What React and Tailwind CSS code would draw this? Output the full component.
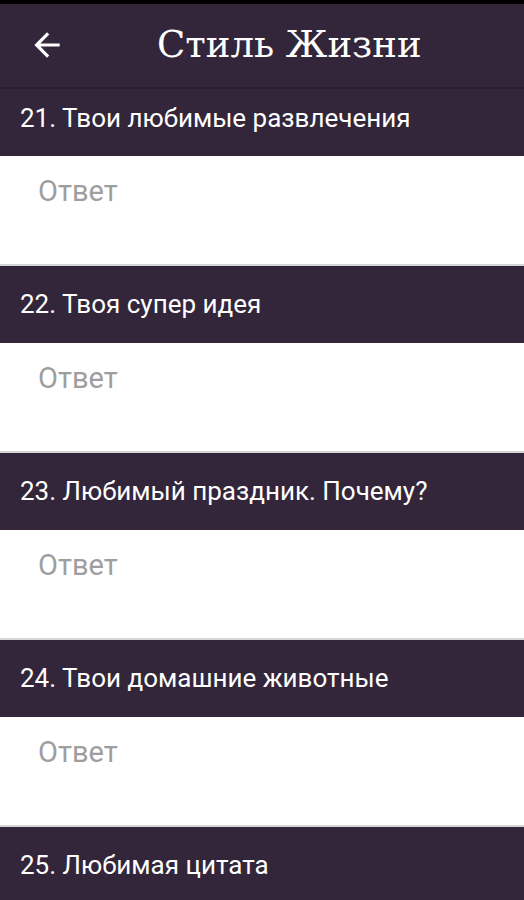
import React from "react";

const questions = [
  "21. Твои любимые развлечения",
  "22. Твоя супер идея",
  "23. Любимый праздник. Почему?",
  "24. Твои домашние животные",
  "25. Любимая цитата",
];

export default function App() {
  return (
    <div className="w-[524px] h-[900px] overflow-hidden bg-white flex flex-col" style={{ fontFamily: "Roboto, 'Noto Sans', sans-serif" }}>
      <div className="h-[4px] bg-black shrink-0" />
      <div className="h-[83px] shrink-0 bg-[#33263a] flex items-center relative">
        <div className="w-[94px] flex items-center justify-center mt-[-2px]">
          <svg width="38" height="38" viewBox="0 0 24 24" fill="white">
            <path d="M20 11H7.83l5.59-5.59L12 4l-8 8 8 8 1.41-1.41L7.83 13H20v-2z" />
          </svg>
        </div>
        <div className="text-white text-[37px] leading-none ml-[63px] mt-[-2px]" style={{ fontFamily: "'DejaVu Serif', 'Liberation Serif', serif" }}>
          Стиль Жизни
        </div>
      </div>
      <div className="h-[2px] bg-[#2a1f30] shrink-0" />
      {questions.map((q, i) => (
        <div key={i} className="shrink-0 flex flex-col">
          <div className={`${i === 0 ? "h-[67px] pb-[8px]" : "h-[77px]"} bg-[#33263a] flex items-center px-[20px] text-white text-[26px]`}>
            {q}
          </div>
          {i < questions.length - 1 && (
            <div className="h-[110px] bg-white border-b-[2px] border-[#d6d6d6] px-[38px] pt-[14px] text-[29px] text-[#9e9e9e]">
              Ответ
            </div>
          )}
        </div>
      ))}
    </div>
  );
}
